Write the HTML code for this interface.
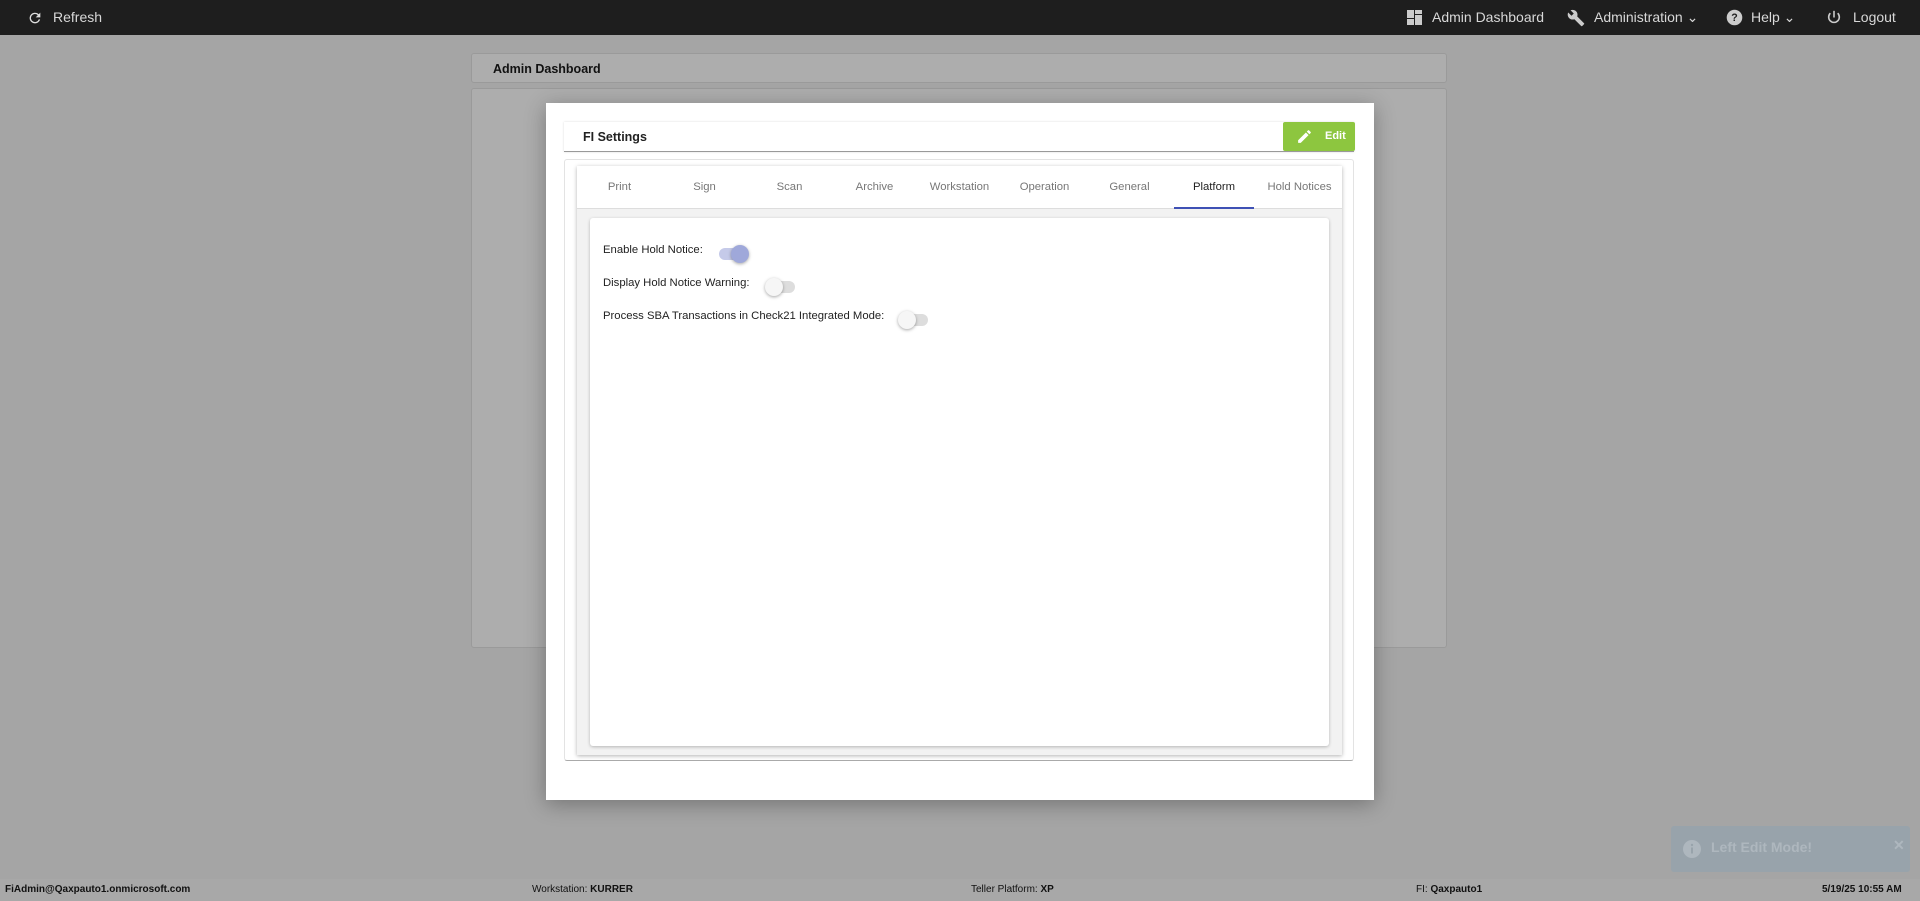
<!DOCTYPE html>
<html><head><meta charset="utf-8"><style>
*{box-sizing:border-box;margin:0;padding:0}
body{width:1920px;height:901px;overflow:hidden;background:#a5a5a5;font-family:"Liberation Sans",sans-serif;position:relative}
.top{position:absolute;left:0;top:0;width:1920px;height:35px;background:#1e1e1e;color:#d8d8d8;font-size:14px}
.top span{position:absolute;top:9px}
.abs{position:absolute}
.panel{position:absolute;background:#adadad;border:1px solid #9a9a9a;border-radius:3px}
.modal{position:absolute;left:546px;top:103px;width:828px;height:697px;background:#fff;box-shadow:0 4px 20px rgba(0,0,0,.3)}
.tab{position:absolute;top:0;width:85px;height:43px;line-height:43px;text-align:center;font-size:11.3px;color:#777}
.row{position:absolute;left:603px;font-size:11.3px;color:#222}
.tg{position:absolute;width:28px;height:12px;border-radius:6px;background:#ddd}
.tg i{position:absolute;top:-3px;width:18px;height:18px;border-radius:50%;background:#f6f6f6;box-shadow:0 1px 3px rgba(0,0,0,.35)}
.foot{position:absolute;left:0;top:879px;width:1920px;height:22px;background:#a8a8a8;font-size:10px;color:#111;line-height:22px}
.foot span{position:absolute}
</style></head><body>
<div class="top">
<svg class="abs" style="left:27px;top:10px" width="16" height="16" viewBox="0 0 24 24"><path d="M17.6 6.4A8 8 0 1 0 19.7 14h-2.1a6 6 0 1 1-1.4-6.2L13 11h7V4z" fill="#ddd"/></svg>
<span style="left:53px">Refresh</span>
<svg class="abs" style="left:1407px;top:10px" width="15" height="15" viewBox="0 0 15 15" fill="#ccc"><rect x="0" y="0" width="7" height="8"/><rect x="8" y="0" width="7" height="4"/><rect x="8" y="5" width="7" height="10"/><rect x="0" y="9" width="7" height="6"/></svg>
<span style="left:1432px">Admin Dashboard</span>
<svg class="abs" style="left:1567px;top:9px" width="18" height="18" viewBox="0 0 24 24"><path d="M22.7 19l-9.1-9.1c.9-2.3.4-5-1.5-6.9-2-2-5-2.4-7.4-1.3L9 6 6 9 1.6 4.7C.4 7.1.9 10.1 2.9 12.1c1.9 1.9 4.6 2.4 6.9 1.5l9.1 9.1c.4.4 1 .4 1.4 0l2.3-2.3c.5-.4.5-1.1.1-1.4z" fill="#ccc"/></svg>
<span style="left:1594px">Administration ⌄</span>
<svg class="abs" style="left:1726px;top:9px" width="17" height="17" viewBox="0 0 24 24"><circle cx="12" cy="12" r="11" fill="#ccc"/><text x="12" y="17" text-anchor="middle" font-size="15" font-weight="bold" fill="#1e1e1e" font-family="Liberation Sans">?</text></svg>
<span style="left:1751px">Help ⌄</span>
<svg class="abs" style="left:1826px;top:9px" width="16" height="17" viewBox="0 0 24 24" fill="none" stroke="#ccc" stroke-width="2.4"><path d="M12 2v10"/><path d="M6.5 5.5a8 8 0 1 0 11 0"/></svg>
<span style="left:1853px">Logout</span>
</div>
<div class="panel" style="left:471px;top:53px;width:976px;height:30px"><span class="abs" style="left:21px;top:8px;font-size:12.5px;font-weight:bold;color:#111">Admin Dashboard</span></div>
<div class="panel" style="left:471px;top:88px;width:976px;height:560px"></div>
<div class="modal"></div>
<div class="abs" style="left:564px;top:122px;width:790px;height:30px;background:#fff;border-bottom:1px solid #999;box-shadow:0 0 2px rgba(0,0,0,.15)"><span class="abs" style="left:19px;top:8px;font-size:12.5px;font-weight:bold;color:#222">FI Settings</span></div>
<div class="abs" style="left:1283px;top:122px;width:72px;height:29px;background:#8dc63f;border-radius:2px;color:#fff;font-size:11px;font-weight:bold"><svg class="abs" style="left:13px;top:6px" width="17" height="17" viewBox="0 0 24 24"><path d="M3 17.3V21h3.7l11-11-3.7-3.7zM20.7 7a1 1 0 0 0 0-1.4l-2.3-2.3a1 1 0 0 0-1.4 0l-1.8 1.8 3.7 3.7z" fill="#fff"/></svg><span class="abs" style="left:42px;top:8px">Edit</span></div>
<div class="abs" style="left:564px;top:159px;width:790px;height:602px;border:1px solid #e3e3e3;border-bottom:1px solid #aaa;border-radius:3px"></div>
<div class="abs" style="left:577px;top:166px;width:765px;height:589px;background:#f2f2f2;box-shadow:0 1px 4px rgba(0,0,0,.3)">
<div class="abs" style="left:0;top:0;width:765px;height:43px;background:#fff;border-bottom:1px solid #ddd">
<div class="tab" style="left:0">Print</div><div class="tab" style="left:85px">Sign</div><div class="tab" style="left:170px">Scan</div><div class="tab" style="left:255px">Archive</div><div class="tab" style="left:340px">Workstation</div><div class="tab" style="left:425px">Operation</div><div class="tab" style="left:510px">General</div><div class="tab" style="left:597px;width:80px;color:#222;border-bottom:2px solid #3f51b5">Platform</div><div class="tab" style="left:680px">Hold Notices</div>
</div>
<div class="abs" style="left:13px;top:52px;width:739px;height:528px;background:#fff;border-radius:3px;box-shadow:0 1px 3px rgba(0,0,0,.25)"></div>
</div>
<div class="row" style="top:244px">Enable Hold Notice:</div>
<div class="tg" style="left:719px;top:248px;background:#c5cae9"><i style="left:12px;background:#9fa8da"></i></div>
<div class="row" style="top:277px">Display Hold Notice Warning:</div>
<div class="tg" style="left:767px;top:281px"><i style="left:-2px"></i></div>
<div class="row" style="top:310px">Process SBA Transactions in Check21 Integrated Mode:</div>
<div class="tg" style="left:900px;top:314px"><i style="left:-2px"></i></div>
<div class="abs" style="left:1671px;top:826px;width:239px;height:46px;background:#98a3ab;border-radius:3px;color:#aeb7be;font-size:14px;font-weight:bold">
<svg class="abs" style="left:12px;top:14px" width="18" height="18" viewBox="0 0 18 18"><circle cx="9" cy="9" r="9" fill="#aeb7be"/><rect x="8" y="7.5" width="2" height="6" fill="#98a3ab"/><circle cx="9" cy="5" r="1.2" fill="#98a3ab"/></svg>
<span class="abs" style="left:40px;top:13px">Left Edit Mode!</span><span class="abs" style="left:222px;top:11px">✕</span></div>
<div class="foot">
<span style="left:5px;font-weight:bold">FiAdmin@Qaxpauto1.onmicrosoft.com</span>
<span style="left:532px">Workstation: <b>KURRER</b></span>
<span style="left:971px">Teller Platform: <b>XP</b></span>
<span style="left:1416px">FI: <b>Qaxpauto1</b></span>
<span style="left:1822px;font-weight:bold">5/19/25 10:55 AM</span>
</div>
</body></html>
